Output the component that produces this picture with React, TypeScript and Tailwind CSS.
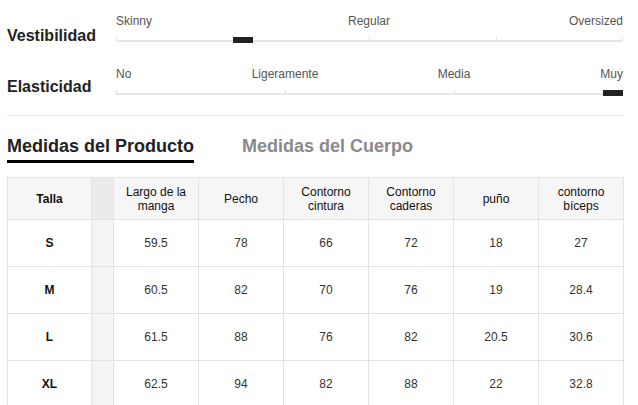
import React from 'react';

type Scale = {
  title: string;
  labelTop: string;
  labels: { text: string; pos: number; align: 'left' | 'center' | 'right' }[];
  ticks: number[];
  marker: number;
};

const scales: Scale[] = [
  {
    title: 'Vestibilidad',
    labelTop: 'pt-[14px]',
    labels: [
      { text: 'Skinny', pos: 0, align: 'left' },
      { text: 'Regular', pos: 253, align: 'center' },
      { text: 'Oversized', pos: 507, align: 'right' },
    ],
    ticks: [0, 127, 253, 380, 506],
    marker: 117,
  },
  {
    title: 'Elasticidad',
    labelTop: 'pt-[12px]',
    labels: [
      { text: 'No', pos: 0, align: 'left' },
      { text: 'Ligeramente', pos: 169, align: 'center' },
      { text: 'Media', pos: 338, align: 'center' },
      { text: 'Muy', pos: 507, align: 'right' },
    ],
    ticks: [0, 169, 338, 506],
    marker: 487,
  },
];

const headers = ['Largo de la manga', 'Pecho', 'Contorno cintura', 'Contorno caderas', 'puño', 'contorno bíceps'];

const rows = [
  { size: 'S', values: ['59.5', '78', '66', '72', '18', '27'] },
  { size: 'M', values: ['60.5', '82', '70', '76', '19', '28.4'] },
  { size: 'L', values: ['61.5', '88', '76', '82', '20.5', '30.6'] },
  { size: 'XL', values: ['62.5', '94', '82', '88', '22', '32.8'] },
];

function ScaleRow({ scale, height }: { scale: Scale; height: string }) {
  return (
    <div className={`flex ${height}`}>
      <div className={`w-[109px] ${scale.labelTop}`}>
        <span className="text-[16px] leading-6 font-bold text-[#222]">{scale.title}</span>
      </div>
      <div className="relative w-[507px]">
        {scale.labels.map((l) => (
          <span
            key={l.text}
            className={`absolute top-[4px] text-[12px] leading-[14px] text-[#555] whitespace-nowrap ${
              l.align === 'left' ? 'left-0' : l.align === 'right' ? 'right-0' : '-translate-x-1/2'
            }`}
            style={l.align === 'center' ? { left: l.pos } : undefined}
          >
            {l.text}
          </span>
        ))}
        <div className="absolute left-0 right-0 top-[30px] h-[2px] bg-[#e6e6e6]" />
        {scale.ticks.map((t) => (
          <div key={t} className="absolute top-[27px] h-[3px] w-px bg-[#e0e0e0]" style={{ left: t }} />
        ))}
        <div className="absolute top-[27px] h-[6px] w-[20px] bg-[#222]" style={{ left: scale.marker }} />
      </div>
    </div>
  );
}

export default function App() {
  return (
    <div className="w-[638px] h-[405px] overflow-hidden bg-white pl-[7px] pt-[10px] font-['Liberation_Sans',Arial,sans-serif]">
      {/* Fit scales */}
      <ScaleRow scale={scales[0]} height="h-[53px]" />
      <ScaleRow scale={scales[1]} height="h-[52px]" />
      <div className="w-[616px] h-px bg-[#e8e8e8]" />

      {/* Tabs */}
      <div className="flex items-start pt-[18px]">
        <div className="pb-px border-b-[3px] border-black">
          <span className="text-[18px] leading-6 font-bold text-[#222]">Medidas del Producto</span>
        </div>
        <div className="ml-[48px]">
          <span className="text-[18px] leading-6 font-bold text-[#8a8a8a]">Medidas del Cuerpo</span>
        </div>
      </div>

      {/* Measurements table */}
      <table className="mt-[14px] w-[616px] table-fixed border-collapse text-[12px] leading-[14px]">
        <colgroup>
          <col className="w-[84px]" />
          <col className="w-[22px]" />
          {headers.map((h) => (
            <col key={h} className="w-[85px]" />
          ))}
        </colgroup>
        <thead>
          <tr className="h-[42px] bg-[#f6f6f6]">
            <th className="border border-[#e3e3e3] font-bold text-[#111] text-center">Talla</th>
            <th className="border border-[#e3e3e3] bg-[#ebebeb]" />
            {headers.map((h) => (
              <th key={h} className="border border-[#e3e3e3] font-normal text-[#111] text-center px-1">
                {h}
              </th>
            ))}
          </tr>
        </thead>
        <tbody>
          {rows.map((r) => (
            <tr key={r.size} className="h-[47px]">
              <td className="border border-[#e3e3e3] font-bold text-[#111] text-center">{r.size}</td>
              <td className="border border-[#e3e3e3] bg-[#f4f4f4]" />
              {r.values.map((v, i) => (
                <td key={i} className="border border-[#e3e3e3] text-[#333] text-center">
                  {v}
                </td>
              ))}
            </tr>
          ))}
        </tbody>
      </table>
    </div>
  );
}
